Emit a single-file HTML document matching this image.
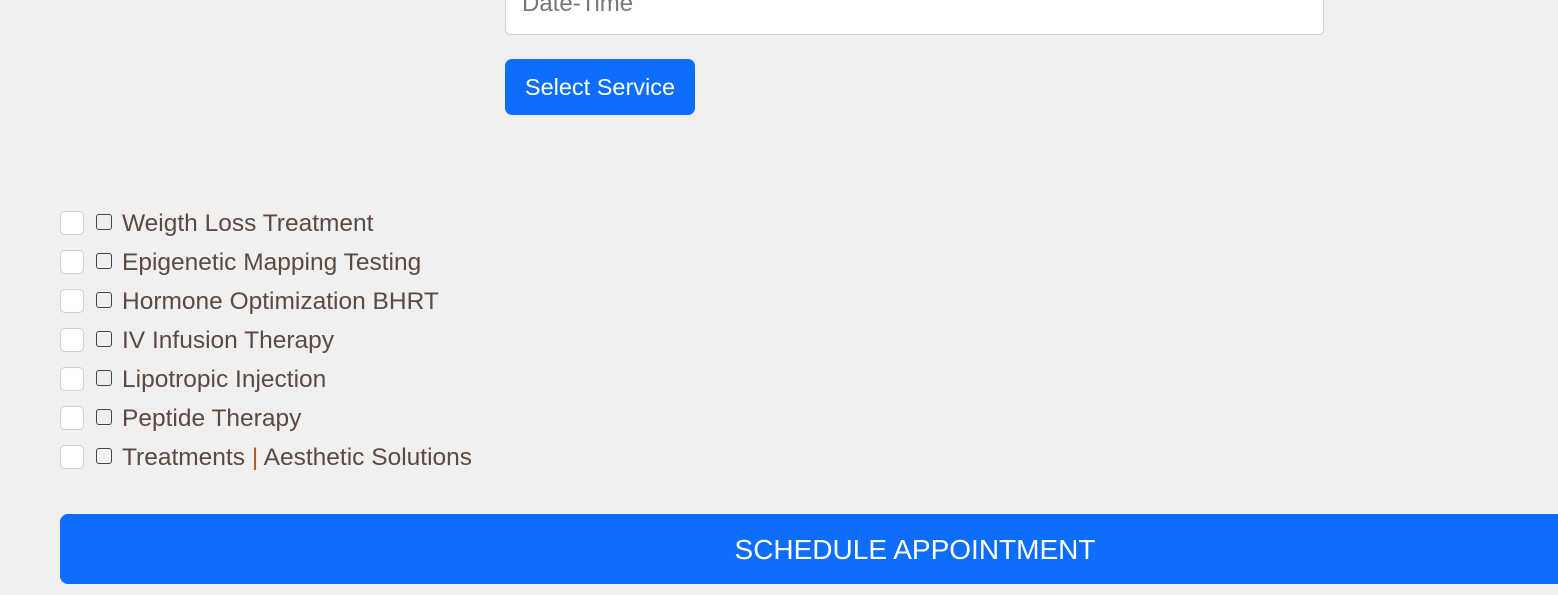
<!DOCTYPE html>
<html><head><style>
body{margin:0;width:1558px;height:595px;background:#f1f0ee;position:relative;overflow:hidden;font-family:"Liberation Sans",sans-serif;}
.inp{position:absolute;left:505px;top:-20px;width:817px;height:53px;background:#fff;border:1px solid #cfcfcf;border-radius:5px;}
.inp span{position:absolute;left:16px;top:9px;font-size:24px;color:#777;}
.btn{position:absolute;left:505px;top:59px;width:190px;height:56px;background:#0d6efd;border-radius:7px;color:#fff;font-size:23.5px;line-height:57px;text-align:center;}
.row{position:absolute;left:60px;height:24px;}
.cb{position:absolute;left:0;top:0;width:22px;height:22px;border:1px solid #cfcfcf;border-radius:5px;background:#fff;}
.sb{position:absolute;left:36px;top:3px;width:14px;height:14px;border:1.5px solid #444;border-radius:3px;}
.t{position:absolute;left:62px;top:-1px;font-size:24.5px;color:#5a4a42;white-space:nowrap;}
.big{position:absolute;left:60px;top:514px;width:1710px;height:70px;background:#0d6efd;border-radius:8px;color:#fff;font-size:28px;line-height:72px;text-align:center;}
</style></head><body>
<div class="inp"><span>Date-Time</span></div>
<div class="btn">Select Service</div>
<div class="row" style="top:211px"><div class="cb"></div><div class="sb"></div><div class="t">Weigth Loss Treatment</div></div>
<div class="row" style="top:250px"><div class="cb"></div><div class="sb"></div><div class="t">Epigenetic Mapping Testing</div></div>
<div class="row" style="top:289px"><div class="cb"></div><div class="sb"></div><div class="t">Hormone Optimization BHRT</div></div>
<div class="row" style="top:328px"><div class="cb"></div><div class="sb"></div><div class="t">IV Infusion Therapy</div></div>
<div class="row" style="top:367px"><div class="cb"></div><div class="sb"></div><div class="t">Lipotropic Injection</div></div>
<div class="row" style="top:406px"><div class="cb"></div><div class="sb"></div><div class="t">Peptide Therapy</div></div>
<div class="row" style="top:445px"><div class="cb"></div><div class="sb"></div><div class="t">Treatments <span style="color:#b5562a">|</span> Aesthetic Solutions</div></div>
<div class="big">SCHEDULE APPOINTMENT</div>
</body></html>
